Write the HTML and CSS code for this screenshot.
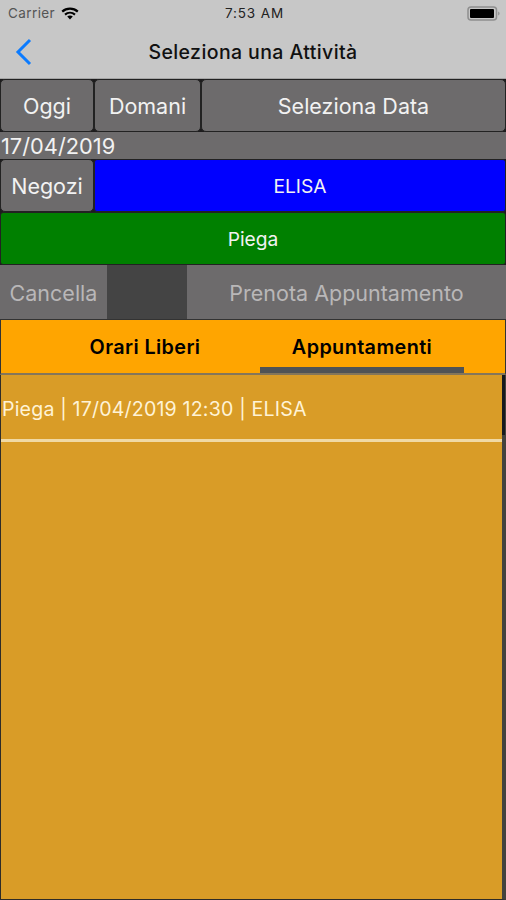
FILE: index.html
```html
<!DOCTYPE html>
<html lang="it">
<head>
    <meta charset="UTF-8">
    <meta name="viewport" content="width=device-width, initial-scale=1.0">
    <title>Seleziona una Attività</title>
    <link rel="stylesheet" href="styles.css">
</head>
<body>
    <div class="app">
        <header class="header">
            <div class="status-bar">
                <div class="carrier">
                    <span>Carrier</span>
                    <svg class="wifi" width="18" height="13" viewBox="0 0 18 13">
                        <path d="M1.2 4.6C5.6.6 12.4.6 16.8 4.6" fill="none" stroke="#000" stroke-width="2.2"/>
                        <path d="M4 7.6c2.9-2.5 7.1-2.5 10 0" fill="none" stroke="#000" stroke-width="2.1"/>
                        <path d="M6.2 9.5c1.6-1.3 4-1.3 5.6 0L9 12.4z" fill="#000"/>
                    </svg>
                </div>
                <span class="time">7:53 AM</span>
                <svg class="battery" width="34" height="15" viewBox="0 0 34 15">
                    <rect x="1" y="1" width="28.5" height="13" rx="3" fill="none" stroke="#8f8f8f" stroke-width="1.5"/>
                    <rect x="3" y="3" width="24" height="9" rx="1" fill="#000"/>
                    <path d="M31.2 5.5c1.8.6 1.8 3.4 0 4z" fill="#8f8f8f"/>
                </svg>
            </div>
            <div class="nav-bar">
                <svg class="back" width="18" height="28" viewBox="0 0 18 28">
                    <path d="M16 2 4 14l12 12" fill="none" stroke="#0b7bff" stroke-width="3"/>
                </svg>
                <h1 class="title">Seleziona una Attività</h1>
            </div>
        </header>

        <div class="row dates">
            <button class="btn">Oggi</button>
            <button class="btn">Domani</button>
            <button class="btn">Seleziona Data</button>
        </div>
        <div class="current-date">17/04/2019</div>
        <div class="row shops">
            <button class="btn">Negozi</button>
            <button class="btn picker blue">ELISA</button>
        </div>
        <div class="row">
            <button class="btn picker green">Piega</button>
        </div>
        <div class="actions">
            <button class="action" disabled>Cancella</button>
            <button class="action" disabled>Prenota Appuntamento</button>
        </div>

        <div class="tabs">
            <div class="tab">Orari Liberi</div>
            <div class="tab active">Appuntamenti</div>
        </div>
        <div class="list">
            <div class="item">Piega | 17/04/2019 12:30 | ELISA</div>
            <div class="scrollbar"></div>
        </div>
    </div>
</body>
</html>
```
FILE: styles.css
```css
* {
    box-sizing: border-box;
}
body {
    margin: 0;
    font-family: Inter, Roboto, sans-serif;
    background-color: #6d6b6c;
}
button {
    font-family: inherit;
    margin: 0;
    padding: 0;
}
.app {
    display: flex;
    flex-direction: column;
    height: 900px;
    overflow: hidden;
}
.header {
    height: 79px;
    background-color: #c7c7c7;
    border-bottom: 1px solid #a5a5a5;
}
.status-bar {
    display: grid;
    grid-template-columns: 1fr auto 1fr;
    align-items: center;
    height: 26px;
    padding: 0 5px 0 8px;
    font-size: 13.5px;
    letter-spacing: 0.4px;
    color: #222;
}
.time {
    letter-spacing: 0.9px;
}
.carrier {
    display: flex;
    align-items: center;
    gap: 6px;
    color: #555;
}
.battery {
    justify-self: end;
}
.nav-bar {
    display: grid;
    grid-template-columns: 18px 1fr 18px;
    align-items: center;
    height: 52px;
    padding: 0 14px;
}
.title {
    margin: 0;
    text-align: center;
    font-size: 19.5px;
    font-weight: 500;
    letter-spacing: 0.4px;
    color: #111;
}
.row {
    display: grid;
    height: 53px;
    background-color: #1d1c1d;
}
.dates {
    grid-template-columns: 94px 107px 1fr;
}
.shops {
    grid-template-columns: 94px 1fr;
}
.btn {
    border: 1px solid #222;
    border-radius: 5px;
    background-color: #6d6b6c;
    color: #f2f2f2;
    font-size: 21.5px;
}
.picker {
    border-radius: 3px;
    padding-top: 1px;
    font-size: 19.2px;
}
.blue {
    background-color: #0000ff;
}
.green {
    background-color: #008000;
}
.current-date {
    height: 27px;
    line-height: 29px;
    padding-left: 1px;
    font-size: 21.8px;
    color: #f2f2f2;
}
.actions {
    display: grid;
    grid-template-columns: 107px 1fr;
    column-gap: 80px;
    height: 54px;
    background-color: #444;
}
.action {
    border: none;
    padding-top: 1px;
    background-color: #6d6b6c;
    color: #b9b7b8;
    font-size: 21.5px;
}
.tabs {
    display: flex;
    height: 56px;
    border: 1px solid #333;
    border-bottom: 2px solid #84765a;
    background-color: #ffa500;
    gap: 28px;
    padding-left: 57px;
}
.tab {
    width: 174px;
    height: 53px;
    border-bottom: 6px solid transparent;
    line-height: 55px;
    text-align: center;
    font-size: 19.8px;
    font-weight: 600;
    letter-spacing: 0.4px;
    color: #000;
}
.tab.active {
    width: 204px;
    border-bottom-color: #505355;
}
.list {
    position: relative;
    flex: 1;
    border: 1px solid #2e2c28;
    border-top: none;
    border-right: 4px solid #44423d;
    background-color: #d99c27;
}
.item {
    height: 67px;
    border-bottom: 3px solid #f0d9a4;
    padding-left: 1px;
    line-height: 68px;
    font-size: 19.6px;
    letter-spacing: 0.17px;
    color: #fff3d6;
}
.scrollbar {
    position: absolute;
    top: 0;
    right: -3px;
    width: 3px;
    height: 60px;
    background-color: #17191e;
}
```
